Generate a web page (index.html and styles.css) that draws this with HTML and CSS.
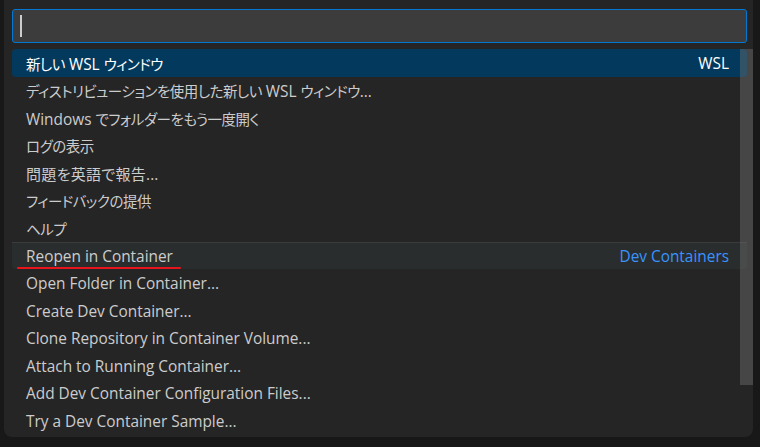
FILE: index.html
```html
<!DOCTYPE html>
<html lang="ja">
<head>
<meta charset="utf-8">
<link rel="stylesheet" href="styles.css">
</head>
<body>
<div class="widget">
  <div class="input"><span class="caret"></span></div>
  <div class="list">
    <div class="row selected"><span class="label"><span class="ja">新しい</span> WSL <span class="ja">ウィンドウ</span></span><span class="desc">WSL</span></div>
    <div class="row"><span class="label"><span class="ja">ディストリビューションを使用した新しい</span> WSL <span class="ja">ウィンドウ</span>...</span></div>
    <div class="row"><span class="label">Windows <span class="ja">でフォルダーをもう一度開く</span></span></div>
    <div class="row"><span class="label"><span class="ja">ログの表示</span></span></div>
    <div class="row"><span class="label"><span class="ja kanji">問題を英語で報告</span>...</span></div>
    <div class="row"><span class="label"><span class="ja">フィードバックの提供</span></span></div>
    <div class="row"><span class="label"><span class="ja">ヘルプ</span></span></div>
    <div class="row hover sep"><span class="label">Reopen in Container</span><span class="desc link">Dev Containers</span><span class="redline"></span></div>
    <div class="row"><span class="label">Open Folder in Container...</span></div>
    <div class="row"><span class="label">Create Dev Container...</span></div>
    <div class="row"><span class="label">Clone Repository in Container Volume...</span></div>
    <div class="row"><span class="label">Attach to Running Container...</span></div>
    <div class="row"><span class="label">Add Dev Container Configuration Files...</span></div>
    <div class="row"><span class="label">Try a Dev Container Sample...</span></div>
    <div class="scrollbar"></div>
  </div>
</div>
</body>
</html>
```
FILE: styles.css
```css
html, body {
  margin: 0;
  padding: 0;
  background: #181818;
  width: 760px;
  height: 447px;
  overflow: hidden;
}
body {
  font-family: "Open Sans", "Noto Sans CJK JP", sans-serif;
  font-size: 15.4px;
  color: #cccccc;
}
.ja {
  font-family: "Noto Sans CJK JP", sans-serif;
  font-size: 14.5px;
  font-feature-settings: "palt";
  letter-spacing: -0.5px;
}
.ja.kanji {
  font-size: 15px;
  letter-spacing: 0.3px;
}
.widget {
  margin: 0 7px 0 4px;
  height: 437px;
  background: #252526;
  border-radius: 0 0 8px 8px;
  box-sizing: border-box;
  padding: 9px 6px 0 8px;
  display: flex;
  flex-direction: column;
}
.input {
  height: 34px;
  box-sizing: border-box;
  border: 1px solid #0078d4;
  border-radius: 3px;
  background: #3c3c3c;
  display: flex;
  align-items: center;
  padding-left: 7px;
}
.caret {
  width: 2px;
  height: 22px;
  background: #cccccc;
}
.list {
  position: relative;
  margin-top: 6px;
  display: flex;
  flex-direction: column;
}
.row {
  position: relative;
  height: 27.5px;
  display: flex;
  align-items: center;
  justify-content: space-between;
  padding: 2px 18px 0 14px;
  border-radius: 4px;
  box-sizing: border-box;
  white-space: nowrap;
}
.row.selected {
  background: #04395e;
  color: #ffffff;
}
.row.hover {
  background: #2a2d2e;
}
.row.sep {
  border-top: 1px solid #3a3b3c;
  border-radius: 0 0 4px 4px;
}
.desc {
  color: #ffffff;
}
.desc.link {
  color: #3794ff;
}
.redline {
  position: absolute;
  left: 5px;
  top: 24px;
  width: 164px;
  height: 2.5px;
  border-radius: 2px;
  background: #e8141c;
}
.scrollbar {
  position: absolute;
  right: -6px;
  top: 0;
  width: 13px;
  height: 336px;
  background: rgba(121, 121, 121, 0.4);
}
```
